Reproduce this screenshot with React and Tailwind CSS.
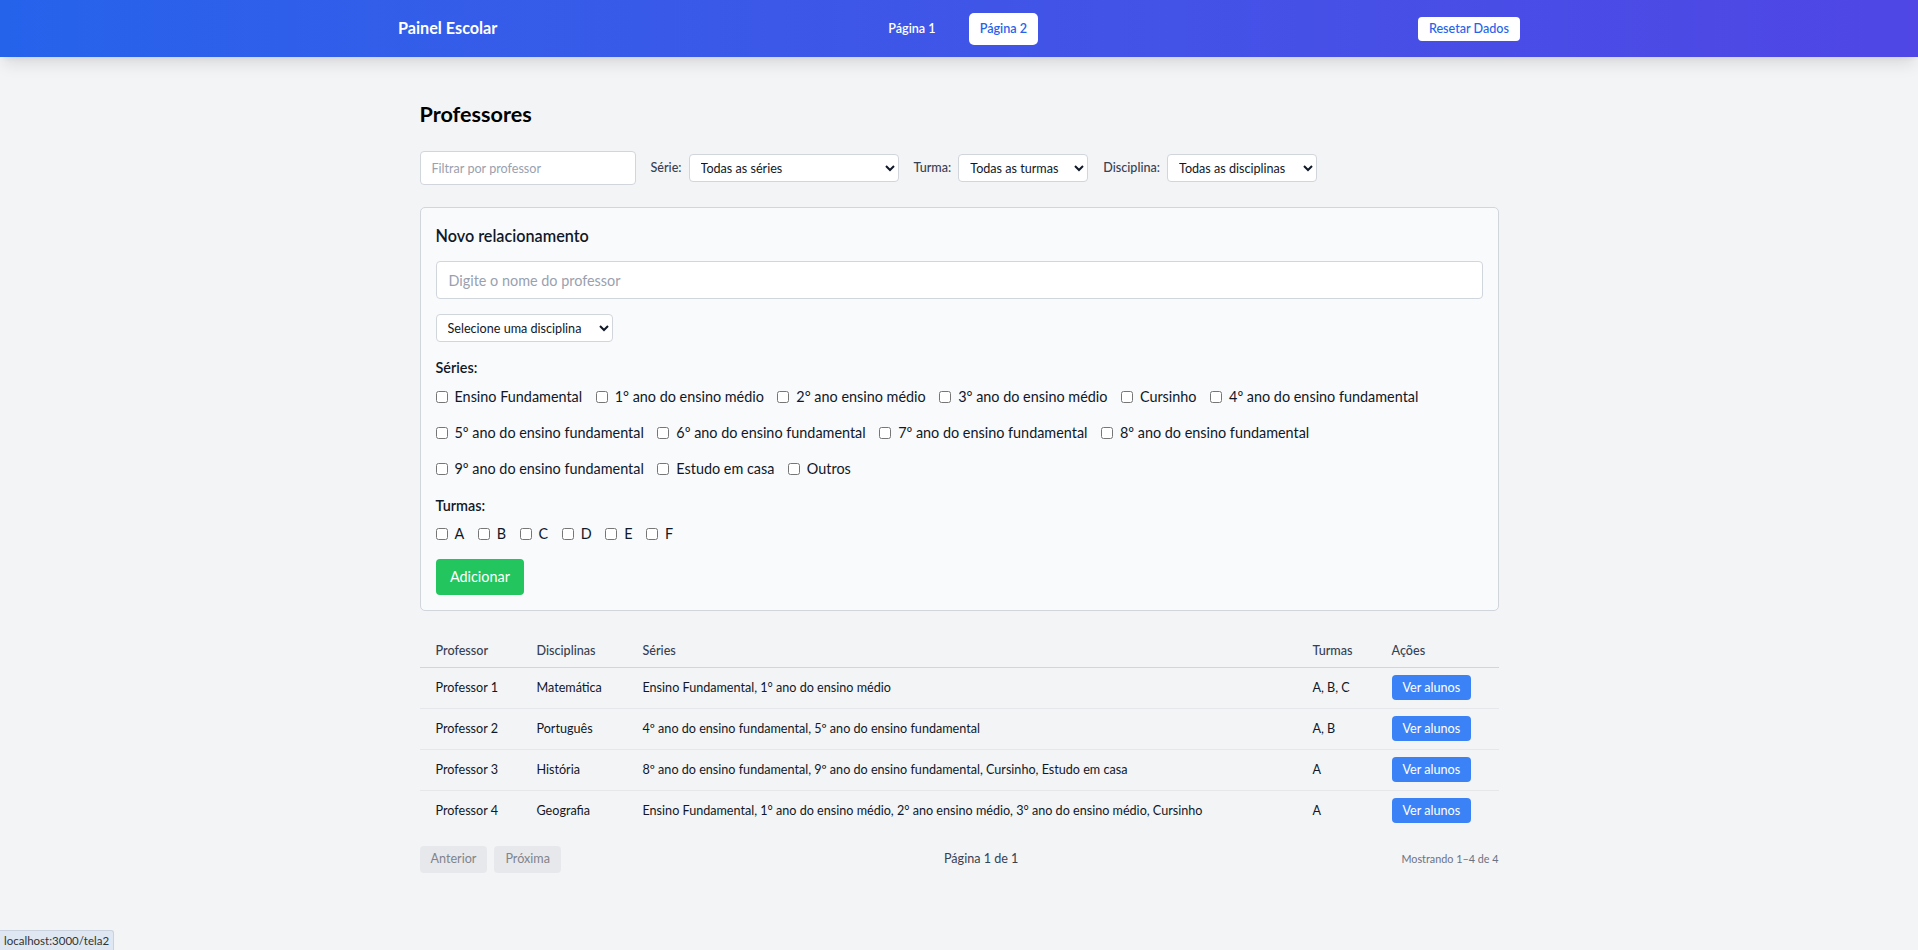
import { useState } from "react";

const SERIES_ROWS = [
  [
    "Ensino Fundamental",
    "1° ano do ensino médio",
    "2° ano ensino médio",
    "3° ano do ensino médio",
    "Cursinho",
    "4º ano do ensino fundamental",
  ],
  [
    "5º ano do ensino fundamental",
    "6º ano do ensino fundamental",
    "7º ano do ensino fundamental",
    "8º ano do ensino fundamental",
  ],
  ["9º ano do ensino fundamental", "Estudo em casa", "Outros"],
];

const TURMAS = ["A", "B", "C", "D", "E", "F"];

const ROWS = [
  { prof: "Professor 1", disc: "Matemática", series: "Ensino Fundamental, 1° ano do ensino médio", turmas: "A, B, C" },
  { prof: "Professor 2", disc: "Português", series: "4º ano do ensino fundamental, 5º ano do ensino fundamental", turmas: "A, B" },
  { prof: "Professor 3", disc: "História", series: "8º ano do ensino fundamental, 9º ano do ensino fundamental, Cursinho, Estudo em casa", turmas: "A" },
  { prof: "Professor 4", disc: "Geografia", series: "Ensino Fundamental, 1° ano do ensino médio, 2° ano ensino médio, 3° ano do ensino médio, Cursinho", turmas: "A" },
];

function Header() {
  return (
    <header className="h-[57px] bg-gradient-to-r from-[#2563eb] to-[#4f46e5] shadow-lg">
      <div className="mx-auto flex h-full w-[1154px] items-center justify-between px-[16px]">
        <span className="text-[16.2px] font-bold text-white">Painel Escolar</span>
        <nav className="flex items-center gap-[22px] text-[12.6px] font-semibold">
          <a className="rounded-[5px] px-[11px] py-[7px] leading-[18px] text-white">Página 1</a>
          <a className="rounded-[5px] bg-white px-[11px] py-[7px] leading-[18px] text-[#2563eb]">Página 2</a>
        </nav>
        <button className="rounded-[4px] bg-white px-[11px] py-[3px] text-[12.6px] font-medium leading-[18px] text-[#2563eb]">
          Resetar Dados
        </button>
      </div>
    </header>
  );
}

function Filters() {
  return (
    <div className="mb-[22px] flex items-center gap-[15px] text-[12.6px]">
      <input
        placeholder="Filtrar por professor"
        className="h-[34px] w-[216px] rounded-[4px] border border-gray-300 bg-white px-[11px] leading-[18px] placeholder:text-gray-400"
      />
      <label className="flex items-center gap-[7px] font-medium text-gray-700">
        Série:
        <select className="h-[28px] w-[210px] rounded-[4px] border border-gray-300 bg-white px-[7px] font-normal text-gray-900">
          <option>Todas as séries</option>
        </select>
      </label>
      <label className="flex items-center gap-[7px] font-medium text-gray-700">
        Turma:
        <select className="h-[28px] w-[130px] rounded-[4px] border border-gray-300 bg-white px-[7px] font-normal text-gray-900">
          <option>Todas as turmas</option>
        </select>
      </label>
      <label className="flex items-center gap-[7px] font-medium text-gray-700">
        Disciplina:
        <select className="h-[28px] w-[150px] rounded-[4px] border border-gray-300 bg-white px-[7px] font-normal text-gray-900">
          <option>Todas as disciplinas</option>
        </select>
      </label>
    </div>
  );
}

function Check({ label }) {
  return (
    <label className="flex items-center gap-[7px]">
      <input type="checkbox" className="h-[12px] w-[12px]" />
      {label}
    </label>
  );
}

function NewRelation() {
  const [nome, setNome] = useState("");
  return (
    <div className="rounded-[5px] border border-gray-300 bg-[#f9fafb] p-[15px] text-[14.4px] text-gray-900">
      <h3 className="mb-[13px] text-[16.2px] font-semibold leading-[25px]">Novo relacionamento</h3>
      <input
        value={nome}
        onChange={(e) => setNome(e.target.value)}
        placeholder="Digite o nome do professor"
        className="mb-[15px] block h-[38px] w-full rounded-[4px] border border-gray-300 bg-white px-[12px] leading-[22px] placeholder:text-gray-400"
      />
      <select className="mb-[15px] block h-[28px] w-[177px] rounded-[4px] border border-gray-300 bg-white px-[7px] text-[12.6px]">
        <option>Selecione uma disciplina</option>
      </select>
      <div className="mb-[7px] font-semibold leading-[22px]">Séries:</div>
      <div className="mb-[15px] flex flex-col gap-[14.6px] leading-[21.6px]">
        {SERIES_ROWS.map((row, i) => (
          <div key={i} className="flex gap-x-[13.5px]">
            {row.map((s) => (
              <Check key={s} label={s} />
            ))}
          </div>
        ))}
      </div>
      <div className="mb-[6px] font-semibold leading-[22px]">Turmas:</div>
      <div className="mb-[14px] flex gap-x-[13.5px] leading-[21.6px]">
        {TURMAS.map((t) => (
          <Check key={t} label={t} />
        ))}
      </div>
      <button className="h-[36px] rounded-[4px] bg-[#22c55e] px-[14.4px] text-white">Adicionar</button>
    </div>
  );
}

function TeacherTable() {
  return (
    <table className="mt-[24px] w-full table-fixed border-collapse text-left text-[12.6px]">
      <colgroup>
        <col className="w-[101px]" />
        <col className="w-[106px]" />
        <col />
        <col className="w-[79px]" />
        <col className="w-[123px]" />
      </colgroup>
      <thead>
        <tr className="border-b border-gray-300 text-gray-700">
          <th className="px-[16px] py-[7px] font-medium leading-[18px]">Professor</th>
          <th className="px-[16px] py-[7px] font-medium leading-[18px]">Disciplinas</th>
          <th className="px-[16px] py-[7px] font-medium leading-[18px]">Séries</th>
          <th className="px-[16px] py-[7px] font-medium leading-[18px]">Turmas</th>
          <th className="px-[16px] py-[7px] font-medium leading-[18px]">Ações</th>
        </tr>
      </thead>
      <tbody className="text-gray-900">
        {ROWS.map((r) => (
          <tr key={r.prof} className="border-b border-gray-200 last:border-b-0">
            <td className="px-[16px] py-[7.5px] leading-[18px]">{r.prof}</td>
            <td className="px-[16px] py-[7.5px] leading-[18px]">{r.disc}</td>
            <td className="px-[16px] py-[7.5px] leading-[18px]">{r.series}</td>
            <td className="px-[16px] py-[7.5px] leading-[18px]">{r.turmas}</td>
            <td className="px-[16px] py-[7.5px]">
              <button className="rounded-[4px] bg-[#3b82f6] px-[11px] py-[3.5px] leading-[18px] text-white">Ver alunos</button>
            </td>
          </tr>
        ))}
      </tbody>
    </table>
  );
}

function Pagination() {
  return (
    <div className="mt-[15px] flex items-center justify-between">
      <div className="flex gap-[7px] text-[12.6px]">
        <button disabled className="h-[27px] rounded-[4px] bg-[#e7e8eb] px-[11px] text-[#80848c]">Anterior</button>
        <button disabled className="h-[27px] rounded-[4px] bg-[#e7e8eb] px-[11px] text-[#80848c]">Próxima</button>
      </div>
      <span className="text-[12.6px] text-gray-700">Página 1 de 1</span>
      <span className="text-[10.8px] text-gray-500">Mostrando 1–4 de 4</span>
    </div>
  );
}

export default function App() {
  return (
    <div className="min-h-screen bg-[#f3f4f6] font-['Lato','Liberation_Sans',sans-serif]">
      <Header />
      <main className="mx-auto w-[1079px] pt-[43px]">
        <h1 className="mb-[22px] text-[21.6px] font-bold leading-[29px] text-black">Professores</h1>
        <Filters />
        <NewRelation />
        <TeacherTable />
        <Pagination />
      </main>
      <div className="fixed bottom-0 left-0 rounded-tr-[3px] border-t border-r border-[#c9d2de] bg-[#dfe7f2] px-[4px] py-[1px] text-[11.5px] text-[#333]">
        localhost:3000/tela2
      </div>
    </div>
  );
}
